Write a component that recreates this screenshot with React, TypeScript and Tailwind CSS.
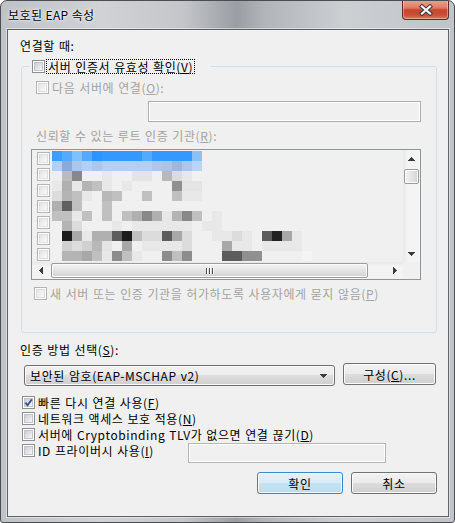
import React from 'react';

// mosaic (blurred certificate names), 10px cells starting at the list's text column
const MOSAIC: string[][] = [
  ['#3d9cff', '#55aaff', '#80c0ff', '#55aaff', '#2d95ff', '#3399ff', '#3399ff', '#3399ff', '#3399ff', '#55aaff', '#3399ff', '#3399ff', '#3399ff', '#3399ff', '#88c0f8'],
  ['#b0d0f8', '#88aad8', '#a8c8f0', '#b0d0f8', '#a8c8f0', '#b0d0f8', '#b0d0f8', '#b0d0f8', '#b0d0f8', '#b0d0f8', '#aac8ee', '#a8c4e8', '#9cb8e0', '#a8c8f0', '#b8d4f8'],
  ['ee', 'bb', '88', 'f0', 'f0', 'e8', 'f0', 'f0', 'e4', 'e4', 'f0', 'b8', 'dc', 'e8', 'f0'],
  ['e8', 'b0', 'e8', 'b4', 'c0', 'e8', 'f0', 'e8', 'f0', 'f0', 'f0', 'f0', '90', 'e4', 'e4'],
  ['dc', 'b4', 'c0', 'e8', 'f0', 'b8', 'c0', 'f0', 'f0', 'c0', 'f0', 'f0', 'c0', 'e8', 'e8'],
  ['b0', '60', 'c0', 'f0', 'f0', 'c0', 'f0', 'f0', 'f0', 'f0', 'f0', 'f0', 'f0', 'f0', 'f0'],
  ['c0', 'c0', 'e8', 'c0', 'f0', 'c0', 'f0', 'c0', 'b0', '88', 'b0', 'e8', 'b4', '88', 'c0', 'f0', 'e8'],
  ['f0', 'b4', 'dc', 'f0', 'f0', 'f0', 'e8', 'f0', 'e8', 'e8', 'e8', 'e8', 'e8', 'e8', 'f0', 'e8', 'e8'],
  ['f0', '1c', 'a8', 'e8', 'b0', 'b0', '5c', '1c', 'c0', 'dc', 'dc', '5c', 'a8', 'dc', 'f0', 'f0', 'e8', 'e8', 'dc', 'e8', 'f0', '5c', '22', 'a8', 'e8'],
  ['f0', 'd0', 'dc', 'd0', 'b8', 'e4', 'f0', 'a8', 'f0', 'e8', 'e8', 'e8', 'e8', 'dc', 'f0', 'f0', 'f0', 'a8', 'e8', 'e8', 'f0', 'e8', 'e8', 'e8', 'e8'],
  ['f0', 'b4', 'b4', 'a8', 'c0', 'e8', '8c', 'c0', 'e8', 'f0', 'f0', '8c', 'c0', '8c', 'f0', 'f0', 'f0', '5c', '5c', '90', '90', 'f0', 'f0', 'f0', 'f0', 'f4'],
];

const cellColor = (c: string) => (c.length === 2 ? `#${c}${c}${c}` : c);

const U = ({ children }: { children: React.ReactNode }) => (
  <span className="underline underline-offset-[1px]">{children}</span>
);

const CheckBox = ({ checked = false, disabled = false }: { checked?: boolean; disabled?: boolean }) => (
  <span
    className={`relative flex h-[13px] w-[13px] shrink-0 items-center justify-center border bg-white ${
      disabled ? 'border-[#b4b4b4]' : 'border-[#8e8f8f]'
    }`}
  >
    <span
      className={`h-[9px] w-[9px] border ${
        disabled
          ? 'border-[#dedede] bg-[linear-gradient(135deg,#e4e4e4,#fafafa)]'
          : 'border-[#c2c6cc] bg-[linear-gradient(135deg,#c9cdd3,#f7f7f7)]'
      }`}
    />
    {checked && (
      <svg className="absolute left-0 top-0" width="11" height="11" viewBox="0 0 11 11">
        <path d="M2.3 5.6 L4.5 8.2 L8.8 2.4" fill="none" stroke="#3a5597" strokeWidth="1.9" />
      </svg>
    )}
  </span>
);

const btnGray =
  'border-[#707070] bg-[linear-gradient(to_bottom,#f2f2f2_0%,#ebebeb_50%,#dddddd_50%,#cfcfcf_100%)] shadow-[inset_0_0_0_1px_#fbfbfb]';
const btnBlue =
  'border-[#3c86c6] bg-[linear-gradient(to_bottom,#e3f2fb_0%,#d6ecf8_50%,#c6e3f4_50%,#bcdcef_100%)] shadow-[inset_0_0_0_1px_#f2f9fd]';

const Arrow = ({ dir }: { dir: 'up' | 'down' | 'left' | 'right' }) => {
  const pts = {
    up: '0,4 3.5,0 7,4',
    down: '0,0 3.5,4 7,0',
    left: '4,0 0,3.5 4,7',
    right: '0,0 4,3.5 0,7',
  }[dir];
  const vertical = dir === 'up' || dir === 'down';
  return (
    <svg width={vertical ? 7 : 4} height={vertical ? 4 : 7} shapeRendering="crispEdges">
      <polygon points={pts} fill="#3c3c3c" />
    </svg>
  );
};

const CertList = () => (
  <div className="ml-[9px] mt-[6px] flex h-[131px] w-[390px] flex-col border border-[#8f959b] bg-[#f0f0f0]">
    <div className="flex h-[112px]">
      <div className="flex w-[371px] overflow-hidden">
        <div className="flex w-[20px] shrink-0 flex-col gap-[3px] pl-[5px] pt-[2px]">
          {[0, 1, 2, 3, 4, 5, 6].map((i) => (
            <CheckBox key={i} disabled />
          ))}
        </div>
        <svg className="mt-[1px] shrink-0" width="351" height="111" shapeRendering="crispEdges">
          {MOSAIC.map((row, r) =>
            row.map((c, i) =>
              c === 'f0' ? null : (
                <rect key={`${r}-${i}`} x={i * 10} y={r * 10} width="10" height="10" fill={cellColor(c)} />
              ),
            ),
          )}
        </svg>
      </div>
      {/* vertical scrollbar */}
      <div className="flex w-[17px] flex-col bg-[linear-gradient(to_right,#e9e9e9,#f4f4f4_30%,#f4f4f4)]">
        <div className="flex h-[17px] items-center justify-center">
          <Arrow dir="up" />
        </div>
        <div className="mx-[1px] mt-[2px] h-[15px] rounded-[2px] border border-[#9c9c9c] bg-[linear-gradient(to_right,#f4f4f4,#e2e2e2_55%,#d4d4d4)] shadow-[inset_0_0_0_1px_#fafafa]" />
        <div className="flex-1" />
        <div className="flex h-[17px] items-center justify-center">
          <Arrow dir="down" />
        </div>
      </div>
    </div>
    {/* horizontal scrollbar */}
    <div className="flex h-[17px]">
      <div className="flex w-[371px] bg-[linear-gradient(to_bottom,#e9e9e9,#f4f4f4_30%,#f4f4f4)]">
        <div className="flex w-[17px] items-center justify-center">
          <Arrow dir="left" />
        </div>
        <div className="my-[1px] ml-[2px] flex w-[317px] items-center justify-center rounded-[2px] border border-[#9c9c9c] bg-[linear-gradient(to_bottom,#f4f4f4,#e2e2e2_55%,#d2d2d2)] shadow-[inset_0_0_0_1px_#fafafa]">
          <svg width="8" height="6" shapeRendering="crispEdges">
            <rect x="0" y="0" width="1" height="6" fill="#4a4a4a" />
            <rect x="3" y="0" width="1" height="6" fill="#4a4a4a" />
            <rect x="6" y="0" width="1" height="6" fill="#4a4a4a" />
            <rect x="1" y="0" width="1" height="6" fill="#ffffff" />
            <rect x="4" y="0" width="1" height="6" fill="#ffffff" />
            <rect x="7" y="0" width="1" height="6" fill="#ffffff" />
          </svg>
        </div>
        <div className="flex-1" />
        <div className="flex w-[17px] items-center justify-center">
          <Arrow dir="right" />
        </div>
      </div>
      <div className="w-[17px] bg-[#f0f0f0]" />
    </div>
  </div>
);

export default function App() {
  return (
    <div className="flex h-[523px] w-[455px] flex-col overflow-hidden rounded-t-[7px] rounded-b-[3px] border border-[#4a4d52] bg-[linear-gradient(to_right,#bfc2c6_0%,#d0d2d5_22%,#c4c6ca_40%,#9a9ea4_52%,#b1b4b8_58%,#cdd0d3_76%,#c0c3c7_100%)] font-['Noto_Sans_CJK_KR',sans-serif] text-[12px] leading-[15px] text-black">
      {/* title bar */}
      <div className="flex h-[28px] items-start">
        <div className="pl-[7px] pt-[6px] leading-[16px] tracking-[0.4px] [text-shadow:0_0_5px_#ffffff,0_0_2px_#ffffff]">
          보호된 EAP 속성
        </div>
        <div className="ml-auto mr-[5px] -mt-px flex h-[20px] w-[47px] items-center justify-center rounded-b-[4px] border border-t-0 border-[#5e2a22] bg-[linear-gradient(to_bottom,#e9a592_0%,#dc7b64_42%,#c5462b_52%,#c9503a_80%,#de7a60_100%)] shadow-[inset_0_0_0_1px_rgba(255,255,255,0.35)]">
          <svg width="14" height="12" viewBox="0 0 14 12">
            <path d="M3 2.5 L11 9.5 M11 2.5 L3 9.5" stroke="#3d3d3d" strokeWidth="4.2" strokeLinecap="square" />
            <path d="M3 2.5 L11 9.5 M11 2.5 L3 9.5" stroke="#ffffff" strokeWidth="2.2" strokeLinecap="square" />
          </svg>
        </div>
      </div>

      {/* client area */}
      <div className="ml-[6px] flex h-[488px] w-[442px] flex-col border border-[#5f6166] bg-[#f0f0f0] tracking-[0.6px] shadow-[0_0_0_1px_rgba(255,255,255,0.45)] [word-spacing:0.7px]">
        <div className="ml-[12px] mt-[8px]">연결할 때:</div>

        <fieldset className="ml-[13px] mt-[6px] h-[274px] w-[416px] rounded-[3px] border border-[#d5dfe5]">
          <legend className="ml-[7px] pl-[3px] pr-[16px]">
            <div className="flex h-[15px] items-center">
              <CheckBox />
              <span className="ml-[1px] border border-dotted border-black px-[1px] leading-[13px]">
                서버 인증서 유효성 확인(<U>V</U>)
              </span>
            </div>
          </legend>

          <div className="ml-[14px] mt-[7px] flex h-[13px] items-center gap-[3px] text-[#a3a3a3]">
            <CheckBox disabled />
            <span>
              다음 서버에 연결(<U>O</U>):
            </span>
          </div>
          <div className="ml-[126px] mt-[7px] h-[21px] w-[273px] border border-[#adadad] bg-[#f0f0f0] shadow-[inset_1px_1px_0_#ffffff,inset_-1px_-1px_0_#ffffff]" />

          <div className="ml-[14px] mt-[6px] text-[#a3a3a3]">
            신뢰할 수 있는 루트 인증 기관(<U>R</U>):
          </div>

          <CertList />

          <div className="ml-[12px] mt-[7px] flex h-[13px] items-center gap-[3px] text-[#a3a3a3]">
            <CheckBox disabled />
            <span>
              새 서버 또는 인증 기관을 허가하도록 사용자에게 묻지 않음(<U>P</U>)
            </span>
          </div>
        </fieldset>

        <div className="ml-[12px] mt-[9px]">
          인증 방법 선택(<U>S</U>):
        </div>

        <div className="mt-[6px] flex items-start">
          <div className={`ml-[16px] mt-[2px] flex h-[21px] w-[311px] items-center rounded-[3px] border pl-[5px] ${btnGray}`}>
            <span>보안된 암호(EAP-MSCHAP v2)</span>
            <span className="ml-auto mr-[7px] flex">
              <Arrow dir="down" />
            </span>
          </div>
          <div className={`ml-[8px] flex h-[22px] w-[93px] items-center justify-center rounded-[3px] border ${btnGray}`}>
            구성(<U>C</U>)...
          </div>
        </div>

        <div className="ml-[14px] mt-[10px] flex flex-col gap-[3px]">
          <div className="flex h-[13px] items-center gap-[3px]">
            <CheckBox checked />
            <span>
              빠른 다시 연결 사용(<U>F</U>)
            </span>
          </div>
          <div className="flex h-[13px] items-center gap-[3px]">
            <CheckBox />
            <span>
              네트워크 액세스 보호 적용(<U>N</U>)
            </span>
          </div>
          <div className="flex h-[13px] items-center gap-[3px]">
            <CheckBox />
            <span>
              서버에 Cryptobinding TLV가 없으면 연결 끊기(<U>D</U>)
            </span>
          </div>
          <div className="flex items-start">
            <CheckBox />
            <span className="ml-[3px] w-[150px] leading-[13px]">
              ID 프라이버시 사용(<U>I</U>)
            </span>
            <div className="-mt-px h-[20px] w-[198px] border border-[#b5b5b5] bg-[#f0f0f0] shadow-[inset_1px_1px_0_#ffffff,inset_-1px_-1px_0_#ffffff]" />
          </div>
        </div>

        <div className="mt-[9px] flex justify-end gap-[8px] pr-[11px]">
          <div className={`flex h-[22px] w-[86px] items-center justify-center rounded-[3px] border ${btnBlue}`}>확인</div>
          <div className={`flex h-[22px] w-[86px] items-center justify-center rounded-[3px] border ${btnGray}`}>취소</div>
        </div>
      </div>
    </div>
  );
}
